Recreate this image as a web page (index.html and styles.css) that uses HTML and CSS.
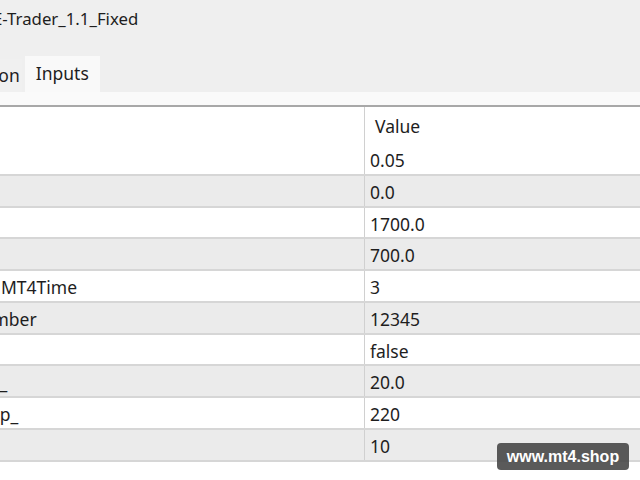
FILE: index.html
```html
<!DOCTYPE html>
<html lang="en">
<head>
    <meta charset="UTF-8">
    <meta name="viewport" content="width=device-width, initial-scale=1.0">
    <title>EA Properties</title>
    <link rel="stylesheet" href="styles.css">
</head>
<body>

    <div class="window">

        <!-- Title bar -->
        <div class="titlebar">E-Trader_1.1_Fixed</div>

        <!-- Tabs -->
        <div class="tabs">
            <div class="tab">Common</div>
            <div class="tab active">Inputs</div>
        </div>
        <div class="band"></div>

        <!-- Inputs table -->
        <div class="grid">
            <div class="row head">
                <div class="cell name"></div>
                <div class="cell value">Value</div>
            </div>
            <div class="row">
                <div class="cell name"></div>
                <div class="cell value">0.05</div>
            </div>
            <div class="row">
                <div class="cell name"></div>
                <div class="cell value">0.0</div>
            </div>
            <div class="row">
                <div class="cell name"></div>
                <div class="cell value">1700.0</div>
            </div>
            <div class="row">
                <div class="cell name"></div>
                <div class="cell value">700.0</div>
            </div>
            <div class="row">
                <div class="cell name">MT4Time</div>
                <div class="cell value">3</div>
            </div>
            <div class="row">
                <div class="cell name cut-number">MagicNumber</div>
                <div class="cell value">12345</div>
            </div>
            <div class="row">
                <div class="cell name"></div>
                <div class="cell value">false</div>
            </div>
            <div class="row">
                <div class="cell name cut-lots">Lots_</div>
                <div class="cell value">20.0</div>
            </div>
            <div class="row">
                <div class="cell name cut-step">Step_</div>
                <div class="cell value">220</div>
            </div>
            <div class="row">
                <div class="cell name"></div>
                <div class="cell value">10</div>
            </div>
        </div>

        <div class="watermark">www.mt4.shop</div>
    </div>

</body>
</html>
```

FILE: styles.css
```css
body {
    margin: 0;
    padding: 0;
    font-family: "Noto Sans", "Open Sans", sans-serif;
    color: #1e1e1e;
    background-color: #efefef;
}

.window {
    position: relative;
    display: flex;
    flex-direction: column;
    width: 640px;
    height: 480px;
    overflow: hidden;
}

.titlebar {
    height: 40px;
    flex-shrink: 0;
    line-height: 37px;
    font-size: 16.8px;
    text-indent: -7px;
    white-space: nowrap;
}

.tabs {
    display: flex;
    flex-shrink: 0;
    align-items: flex-end;
    height: 52px;
    margin-left: -67px;
}

.tab {
    height: 33px;
    line-height: 33px;
    padding: 0 2px 0 11px;
    font-size: 17.5px;
    background-color: #f0f0f0;
    white-space: nowrap;
}

.tab.active {
    height: 36px;
    line-height: 34px;
    padding: 0 11px;
    margin-left: 3px;
    background-color: #f9f9f9;
}

.band {
    height: 13px;
    flex-shrink: 0;
    background-color: #fafafa;
    border-bottom: 2px solid #a8a8a8;
}

.grid {
    flex: 1;
    background-color: white;
}

.row {
    display: grid;
    grid-template-columns: 364px 1fr;
    height: 29.75px;
    border-bottom: 2px solid #d6d6d6;
    font-size: 17.5px;
}

.row:nth-child(odd) {
    background-color: #ebebeb;
}

.row.head {
    height: 37px;
    border-bottom: none;
    background-color: white;
}

.cell {
    padding-top: 1px;
    line-height: 30px;
    white-space: nowrap;
    overflow: hidden;
}

.head .cell {
    padding-top: 0;
    line-height: 38px;
}

.name {
    padding-left: 1px;
}

.value {
    border-left: 1px solid #d0d0d0;
    padding-left: 5px;
}

.head .value {
    padding-left: 10px;
}

.cut-number {
    text-indent: -82px;
}

.cut-lots {
    text-indent: -36px;
}

.cut-step {
    text-indent: -27px;
}

.watermark {
    position: absolute;
    left: 497px;
    top: 443px;
    width: 132px;
    height: 27px;
    line-height: 27px;
    text-align: center;
    border-radius: 4px;
    background-color: rgba(72, 72, 72, 0.9);
    color: white;
    font-family: "Liberation Sans", Arial, sans-serif;
    font-weight: bold;
    font-size: 16px;
}
```
